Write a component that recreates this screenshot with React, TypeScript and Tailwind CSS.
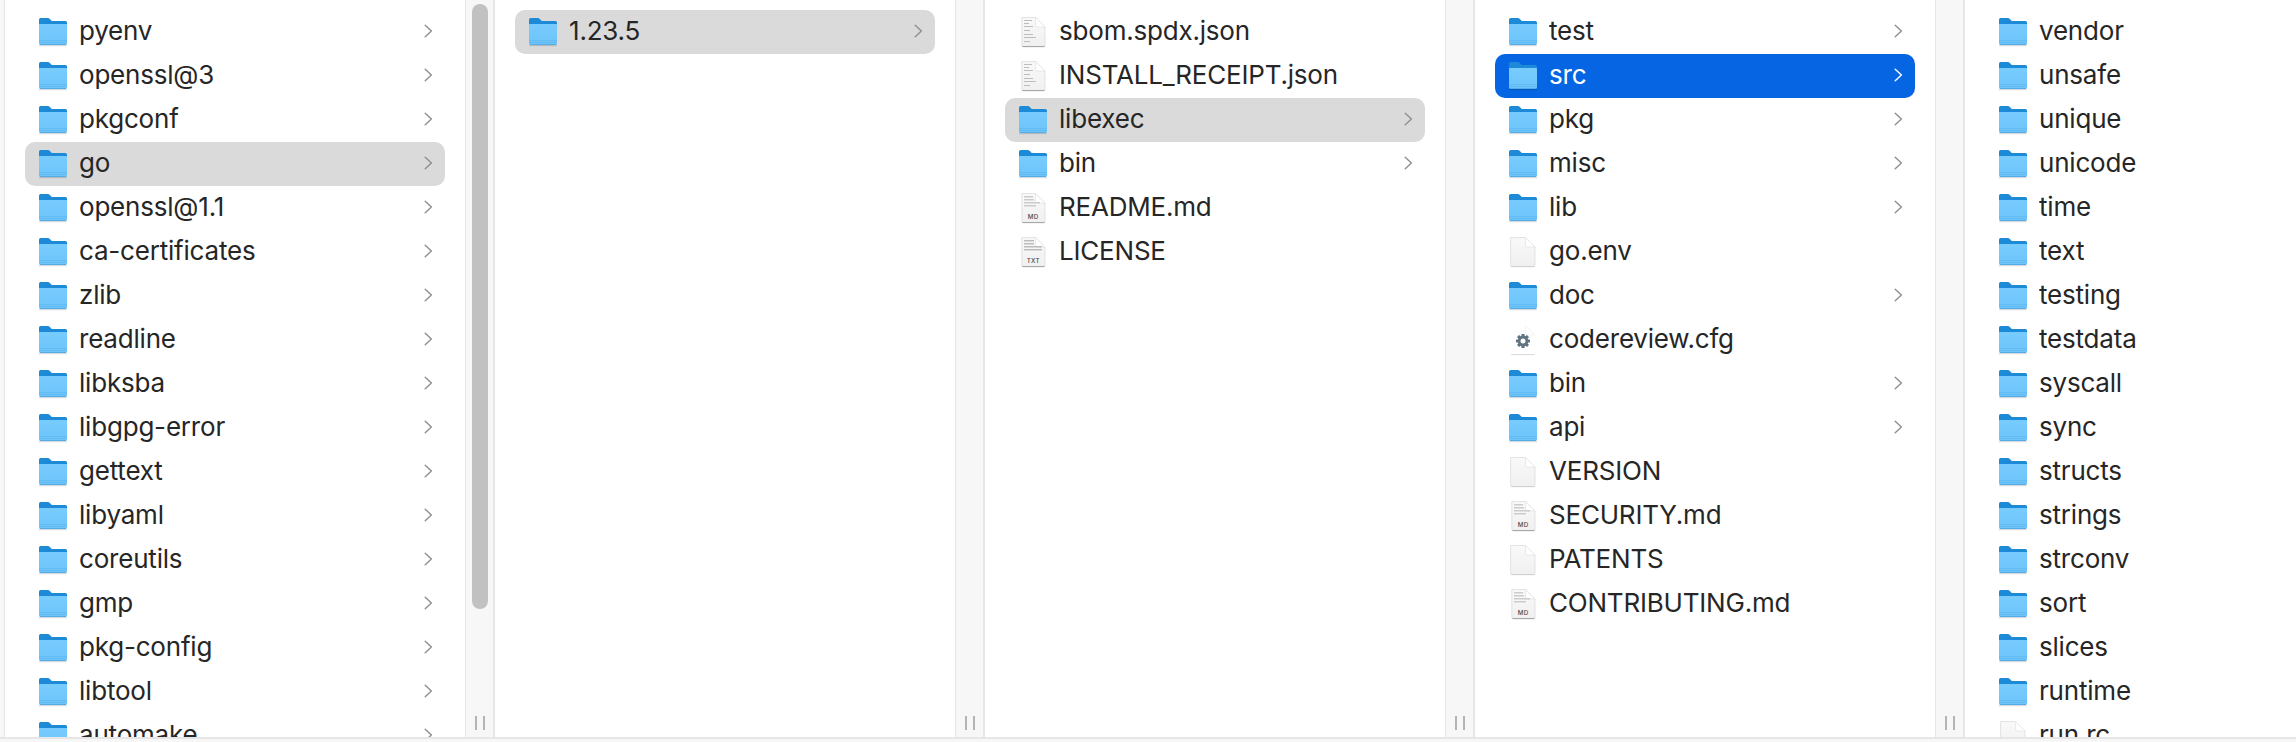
import { useId } from 'react'

type Kind = 'folder' | 'plain' | 'lines' | 'md' | 'txt' | 'cfg'
type Item = { name: string; kind?: Kind; selected?: 'gray' | 'blue' }

const columns: Item[][] = [
  [
    { name: 'pyenv' },
    { name: 'openssl@3' },
    { name: 'pkgconf' },
    { name: 'go', selected: 'gray' },
    { name: 'openssl@1.1' },
    { name: 'ca-certificates' },
    { name: 'zlib' },
    { name: 'readline' },
    { name: 'libksba' },
    { name: 'libgpg-error' },
    { name: 'gettext' },
    { name: 'libyaml' },
    { name: 'coreutils' },
    { name: 'gmp' },
    { name: 'pkg-config' },
    { name: 'libtool' },
    { name: 'automake' },
  ],
  [{ name: '1.23.5', selected: 'gray' }],
  [
    { name: 'sbom.spdx.json', kind: 'lines' },
    { name: 'INSTALL_RECEIPT.json', kind: 'lines' },
    { name: 'libexec', selected: 'gray' },
    { name: 'bin' },
    { name: 'README.md', kind: 'md' },
    { name: 'LICENSE', kind: 'txt' },
  ],
  [
    { name: 'test' },
    { name: 'src', selected: 'blue' },
    { name: 'pkg' },
    { name: 'misc' },
    { name: 'lib' },
    { name: 'go.env', kind: 'plain' },
    { name: 'doc' },
    { name: 'codereview.cfg', kind: 'cfg' },
    { name: 'bin' },
    { name: 'api' },
    { name: 'VERSION', kind: 'plain' },
    { name: 'SECURITY.md', kind: 'md' },
    { name: 'PATENTS', kind: 'plain' },
    { name: 'CONTRIBUTING.md', kind: 'md' },
  ],
  [
    { name: 'vendor' },
    { name: 'unsafe' },
    { name: 'unique' },
    { name: 'unicode' },
    { name: 'time' },
    { name: 'text' },
    { name: 'testing' },
    { name: 'testdata' },
    { name: 'syscall' },
    { name: 'sync' },
    { name: 'structs' },
    { name: 'strings' },
    { name: 'strconv' },
    { name: 'sort' },
    { name: 'slices' },
    { name: 'runtime' },
    { name: 'run.rc', kind: 'plain' },
  ],
]

function FolderIcon() {
  const id = useId()
  return (
    <svg width="32" height="32" viewBox="0 0 32 32" className="shrink-0">
      <defs>
        <linearGradient id={id} x1="0" y1="0" x2="0" y2="1">
          <stop offset="0" stopColor="#78cbfd" />
          <stop offset="1" stopColor="#6cc4fa" />
        </linearGradient>
      </defs>
      <path d="M2 29.6h28" stroke="#000" strokeOpacity="0.12" strokeWidth="1.4" />
      <path
        d="M2 3.8C2 2.8 2.8 2 3.8 2h7c.9 0 1.4.3 2 .9L14.8 5h13.4c1 0 1.8.8 1.8 1.8V14H2z"
        fill="#1c8ad6"
      />
      <path
        d="M2 9c0-.6.5-1 1-1h26c.5 0 1 .4 1 1v18.2c0 1-.8 1.8-1.8 1.8H3.8c-1 0-1.8-.8-1.8-1.8z"
        fill={`url(#${id})`}
      />
      <path d="M2 24.5h28M2 26.5h28" stroke="#55ade6" strokeOpacity="0.5" strokeWidth="0.8" />
      <path d="M3 28.6h26" stroke="#3f9bd8" strokeOpacity="0.7" strokeWidth="0.9" />
    </svg>
  )
}

function Gear() {
  const teeth = [0, 45, 90, 135]
  return (
    <g>
      {teeth.map((a) => (
        <rect key={a} x="14.4" y="10" width="3.2" height="14" rx="0.6" fill="#5f7380" transform={`rotate(${a} 16 17)`} />
      ))}
      <circle cx="16" cy="17" r="5.2" fill="#5f7380" />
      <circle cx="16" cy="17" r="2.5" fill="#fff" />
    </g>
  )
}

function FileIcon({ kind }: { kind: Kind }) {
  const id = useId()
  const label = kind === 'md' ? 'MD' : kind === 'txt' ? 'TXT' : ''
  const plain = kind === 'plain'
  const cfg = kind === 'cfg'
  const left = plain || cfg ? 3.6 : 4.8
  return (
    <svg width="32" height="32" viewBox="0 0 32 32" className="shrink-0">
      <defs>
        <linearGradient id={id} x1="0" y1="0" x2="0" y2="1">
          <stop offset="0" stopColor={cfg ? '#ffffff' : '#f9f9f9'} />
          <stop offset="1" stopColor={cfg ? '#ffffff' : '#f0f0f0'} />
        </linearGradient>
      </defs>
      <path
        d={`M${left} 1.5h14L28 11v18.4c0 .8-.6 1.2-1.2 1.2H${left + 1.2}c-.7 0-1.2-.5-1.2-1.2z`}
        fill={`url(#${id})`}
        stroke={cfg ? 'none' : '#dcdcdc'}
        strokeWidth="0.8"
      />
      <path d={`M${left + 0.6} 30.6H27.6`} stroke={cfg ? '#d8d8d8' : plain ? '#cfcfcf' : '#a0a0a0'} strokeWidth="1" />
      <path d="M18.6 1.5v8c0 .8.6 1.5 1.4 1.5h8z" fill="#fff" stroke={cfg ? '#ececec' : '#dedede'} strokeWidth="0.6" />
      {kind === 'lines' && (
        <g fill="#bdbdbd">
          <rect x="7" y="4" width="8" height="1" />
          <rect x="7" y="7" width="5" height="1" />
          <rect x="7" y="10" width="9" height="1" />
          <rect x="7" y="14" width="6" height="1" />
          <rect x="7" y="18" width="9" height="1" />
          <rect x="7" y="21" width="12" height="1" />
          <rect x="7" y="25" width="6" height="1" />
        </g>
      )}
      {kind === 'md' && (
        <g fill="#cccccc">
          <rect x="7" y="4" width="9" height="1.5" />
          <rect x="7" y="7" width="10" height="1.5" />
          <rect x="7" y="10" width="16" height="1.5" />
          <rect x="7" y="13" width="12" height="1.5" />
        </g>
      )}
      {kind === 'txt' && (
        <g fill="#bcbcbc">
          <rect x="7" y="4" width="10" height="1.5" />
          <rect x="7" y="7" width="10" height="1.5" />
          <rect x="7" y="10" width="18" height="1.5" />
          <rect x="7" y="13" width="18" height="1.5" />
        </g>
      )}
      {cfg && <Gear />}
      {label && (
        <text x="16.2" y="26.5" textAnchor="middle" fontSize="6.2" fill="#4a4a4a" fontFamily="Inter, sans-serif" fontWeight="500" letterSpacing="0.3">
          {label}
        </text>
      )}
    </svg>
  )
}

function Chevron({ white }: { white: boolean }) {
  return (
    <svg width="9" height="14" viewBox="0 0 9 14" fill="none" className="mb-[2px] shrink-0">
      <path
        d="M1.2 1.2 7.4 7l-6.2 5.8"
        stroke={white ? '#ffffff' : '#8e8e8e'}
        strokeWidth="1.4"
        strokeLinecap="round"
        strokeLinejoin="round"
      />
    </svg>
  )
}

function Row({ item }: { item: Item }) {
  const kind = item.kind ?? 'folder'
  const isFolder = kind === 'folder'
  const bg = item.selected === 'blue' ? 'bg-[#0565e2] text-white' : item.selected === 'gray' ? 'bg-[#dadada] text-[#262626]' : 'text-[#262626]'
  return (
    <div className={`flex h-[44px] shrink-0 items-center rounded-[10px] pl-[12px] pr-[12px] ${bg}`}>
      {isFolder ? <FolderIcon /> : <FileIcon kind={kind} />}
      <span className="ml-[10px] mb-[2px] flex-1 truncate text-[26px] leading-[42px] tracking-[-0.2px]">{item.name}</span>
      {isFolder && <Chevron white={item.selected === 'blue'} />}
    </div>
  )
}

function Gutter({ thumb }: { thumb: boolean }) {
  return (
    <div className="flex h-full w-[29px] shrink-0 flex-col items-center justify-between border-x border-[#e6e6e6] bg-[#f7f7f7] pb-[7px] pt-[4px]">
      <div className={thumb ? 'h-[605px] w-[16px] rounded-full bg-[#c1c1c1]' : 'h-0'} />
      <div className="flex h-[14px] gap-[6px]">
        <div className="w-[2px] bg-[#b4b4b4]" />
        <div className="w-[2px] bg-[#b4b4b4]" />
      </div>
    </div>
  )
}

export default function App() {
  return (
    <div className="flex h-[742px] w-[2296px] flex-col overflow-hidden bg-[#f7f7f7] font-['Inter',sans-serif]">
      <div className="flex h-[739px] shrink-0 overflow-hidden border-b-2 border-[#e6e6e6] pl-[4px]">
        {columns.map((items, i) => (
          <div key={i} className="flex h-full w-[490px] shrink-0">
            <div className="flex h-full w-[461px] shrink-0 flex-col overflow-hidden border-l border-[#e6e6e6] bg-white px-[20px] pt-[10px]">
              {items.map((item) => (
                <Row key={item.name} item={item} />
              ))}
            </div>
            <Gutter thumb={i === 0} />
          </div>
        ))}
      </div>
    </div>
  )
}
